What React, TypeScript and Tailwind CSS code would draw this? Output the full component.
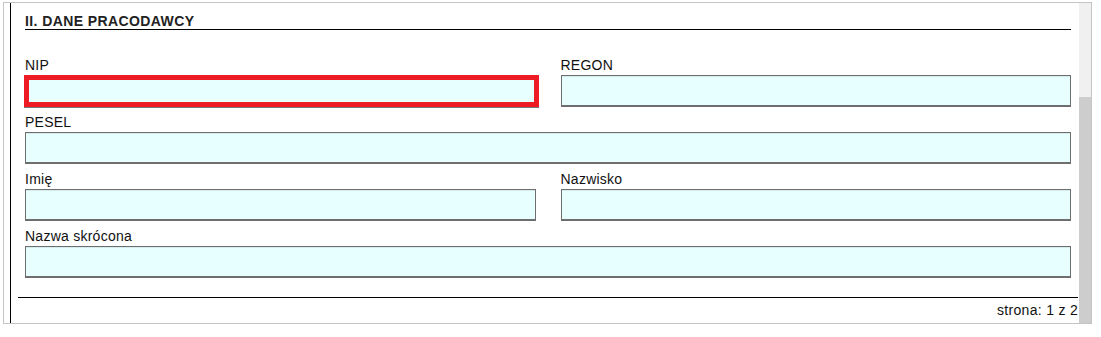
import type { ReactNode } from 'react'

const INPUT =
  'block h-[32px] w-full border border-b-2 border-[#6e6e6e] bg-[#e8ffff] shadow-[inset_0_1px_0_#d4ecec] outline-none'

function Field({ label, children }: { label: string; children?: ReactNode }) {
  return (
    <div className="flex flex-col">
      <span className="mb-[2px] h-[16px] text-[14px] leading-[16px] tracking-[0.25px] text-[#111]">{label}</span>
      {children ?? <input className={INPUT} />}
    </div>
  )
}

export default function App() {
  return (
    <div className="h-[337px] w-[1101px] bg-white pt-[2px] pl-[3px] font-['Liberation_Sans',Arial,sans-serif]">
      <div className="flex h-[322px] w-[1089px] border border-[#c4c4c4]">
        <div className="flex min-w-0 flex-1 pl-[6px]">
          <div className="flex flex-1 flex-col border-l border-black pl-[7px] pr-px">
            <div className="px-[7px] pt-[10px]">
              <h2 className="h-[17px] border-b border-black text-[14px] leading-[16px] font-bold tracking-[0.4px] text-[#222]">
                II. DANE PRACODAWCY
              </h2>

              <div className="mt-[27px] flex flex-col gap-[7px]">
                <div className="grid grid-cols-2 gap-[25px]">
                  <Field label="NIP">
                    <input className="-ml-px block h-[32px] w-[515px] border-[5px] border-[#ed1c24] bg-[#e8ffff] shadow-[0_1px_0_#7a7a7a] outline-none" />
                  </Field>
                  <Field label="REGON" />
                </div>
                <Field label="PESEL" />
                <div className="grid grid-cols-2 gap-[25px]">
                  <Field label="Imię" />
                  <Field label="Nazwisko" />
                </div>
                <Field label="Nazwa skrócona" />
              </div>
            </div>

            <div className="mt-[19px] border-t border-black pt-[4px] text-right text-[14px] leading-[16px] tracking-[0.3px] text-[#111]">
              strona: 1 z 2
            </div>
          </div>
        </div>

        <div className="flex w-[12px] flex-col bg-[#f0f0f0]">
          <div className="mt-[94px] flex-1 bg-[#cdcdcd]" />
        </div>
      </div>
    </div>
  )
}
